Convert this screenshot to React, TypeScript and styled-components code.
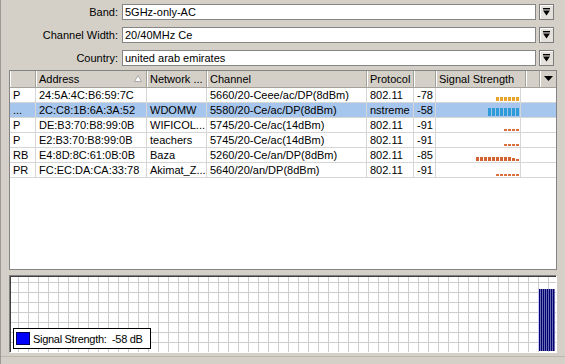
import styled, { createGlobalStyle } from "styled-components";

const GlobalStyle = createGlobalStyle`
  html, body {
    margin: 0;
    padding: 0;
    background: #d4d0c8;
  }
  body {
    font-family: "Liberation Sans", Arial, sans-serif;
    font-size: 11px;
    color: #000;
  }
`;

const Window = styled.div`
  box-sizing: border-box;
  width: 565px;
  height: 364px;
  border-left: 1px solid #9c9a94;
  display: flex;
  flex-direction: column;
  overflow: hidden;
`;

const Form = styled.div`
  display: flex;
  flex-direction: column;
  gap: 7px;
  padding: 4px 11px 0 0;
`;

const FieldRow = styled.div`
  display: flex;
  align-items: stretch;
  height: 16px;
`;

const Label = styled.div`
  width: 117px;
  margin-right: 4px;
  text-align: right;
  line-height: 16px;
`;

const Input = styled.div`
  flex: 1;
  box-sizing: border-box;
  background: #fff;
  border: 1px solid #858585;
  padding-left: 2px;
  line-height: 14px;
`;

const DropButton = styled.div`
  box-sizing: border-box;
  width: 15px;
  margin-left: 3px;
  border: 1px solid #7c7c7c;
  background: #e4e1dc;
  box-shadow: inset 1px 1px #fff;
  display: flex;
  align-items: center;
  justify-content: center;
`;

const Table = styled.div`
  box-sizing: border-box;
  margin: 4px 8px 0 8px;
  height: 200px;
  background: #fff;
  border: 1px solid #848484;
  display: flex;
  flex-direction: column;
`;

const headCols = "26px 111px 60px 160px 47px 22px 90px 14px 16px";
const rowCols = "26px 111px 60px 160px 47px 22px 85px 35px";

const HeaderRow = styled.div`
  display: grid;
  grid-template-columns: ${headCols};
  height: 16px;
  background: #d4d0c8;
  border-bottom: 1px solid #a3a19b;
`;

const HeadCell = styled.div<{ $center?: boolean }>`
  box-sizing: border-box;
  position: relative;
  padding-left: 3px;
  line-height: 16px;
  border-right: 1px solid #a3a19b;
  box-shadow: inset 1px 0 #fff;
  white-space: nowrap;
  overflow: hidden;
  display: flex;
  align-items: center;
  justify-content: ${(p) => (p.$center ? "center" : "flex-start")};
  &:last-child {
    border-right: none;
    padding-left: 0;
  }
`;

const SortMark = styled.span`
  position: absolute;
  right: 4px;
  top: 4px;
  display: flex;
`;

const Row = styled.div<{ $selected?: boolean }>`
  display: grid;
  grid-template-columns: ${rowCols};
  height: 14px;
  border-bottom: 1px solid #d6d6d6;
  background: ${(p) => (p.$selected ? "#a6c6ee" : "#fff")};
`;

const Cell = styled.div`
  box-sizing: border-box;
  padding-left: 3px;
  line-height: 14px;
  border-right: 1px solid #d6d6d6;
  white-space: nowrap;
  overflow: hidden;
  &:last-child {
    border-right: none;
  }
`;

const BarCell = styled.div`
  box-sizing: border-box;
  border-right: 1px solid #d6d6d6;
  display: flex;
  justify-content: flex-end;
  align-items: flex-end;
  gap: 1px;
  padding: 0 1px 1px 0;
`;

const Seg = styled.span<{ $color: string }>`
  display: block;
  width: 3px;
  background: ${(p) => p.$color};
`;

const Chart = styled.div`
  position: relative;
  box-sizing: border-box;
  margin: 5px 8px 0 8px;
  height: 78px;
  border: 1px solid;
  border-color: #808080 #fff #fff #808080;
  box-shadow: inset 1px 1px #404040;
  background-color: #fff;
  background-image: linear-gradient(to right, #cdcdcd 1px, transparent 1px),
    linear-gradient(to bottom, #cdcdcd 1px, transparent 1px);
  background-size: 10px 10px;
  background-position: 8px 6px;
  display: flex;
  justify-content: flex-end;
  align-items: flex-end;
  padding: 0 1px 1px 0;
`;

const SignalBar = styled.div`
  width: 16px;
  height: 62px;
  background: repeating-linear-gradient(
    to right,
    #00006e 0 1px,
    #6c6cb4 1px 2px
  );
  box-shadow: -1px 0 #c8c8ff;
`;

const Legend = styled.div`
  position: absolute;
  left: 3px;
  bottom: 3px;
  box-sizing: border-box;
  width: 138px;
  height: 21px;
  background: #fff;
  border: 1px solid #000;
  display: flex;
  align-items: center;
  gap: 3px;
  padding-left: 2px;
  white-space: pre;
  letter-spacing: -0.3px;
`;

const Swatch = styled.span`
  box-sizing: border-box;
  width: 14px;
  height: 13px;
  background: #0000ff;
  border: 1px solid #00005a;
`;

const StatusBar = styled.div`
  flex: 1;
  margin-top: 3px;
  border-top: 1px solid #bcb8b0;
`;

const DropIcon = () => (
  <svg width="7" height="8" viewBox="0 0 7 8">
    <rect x="0" y="0" width="7" height="1.4" fill="#000" />
    <polygon points="0,2.5 7,2.5 3.5,7.5" fill="#000" />
  </svg>
);

const fields = [
  { label: "Band:", value: "5GHz-only-AC" },
  { label: "Channel Width:", value: "20/40MHz Ce" },
  { label: "Country:", value: "united arab emirates" },
];

type SigRow = {
  flag: string;
  address: string;
  network: string;
  channel: string;
  protocol: string;
  signal: string;
  color: string;
  segs: number[];
  selected?: boolean;
};

const rows: SigRow[] = [
  { flag: "P", address: "24:5A:4C:B6:59:7C", network: "", channel: "5660/20-Ceee/ac/DP(8dBm)", protocol: "802.11", signal: "-78", color: "#e8a42c", segs: [4, 4, 4, 4, 4, 4] },
  { flag: "...", address: "2C:C8:1B:6A:3A:52", network: "WDOMW", channel: "5580/20-Ce/ac/DP(8dBm)", protocol: "nstreme", signal: "-58", color: "#2e9ad8", segs: [8, 8, 8, 8, 8, 8, 8, 8], selected: true },
  { flag: "P", address: "DE:B3:70:B8:99:0B", network: "WIFICOL...", channel: "5745/20-Ce/ac(14dBm)", protocol: "802.11", signal: "-91", color: "#d8703c", segs: [2, 2, 2, 2] },
  { flag: "P", address: "E2:B3:70:B8:99:0B", network: "teachers", channel: "5745/20-Ce/ac(14dBm)", protocol: "802.11", signal: "-91", color: "#d8703c", segs: [2, 2, 2, 2] },
  { flag: "RB", address: "E4:8D:8C:61:0B:0B", network: "Baza", channel: "5260/20-Ce/an/DP(8dBm)", protocol: "802.11", signal: "-85", color: "#d4612e", segs: [4, 4, 4, 4, 4, 4, 4, 4, 4, 3, 2] },
  { flag: "PR", address: "FC:EC:DA:CA:33:78", network: "Akimat_Z...", channel: "5640/20/an/DP(8dBm)", protocol: "802.11", signal: "-91", color: "#d8703c", segs: [2, 2, 2, 2, 2, 2] },
];

export default function App() {
  return (
    <>
      <GlobalStyle />
      <Window>
        <Form>
          {fields.map((f) => (
            <FieldRow key={f.label}>
              <Label>{f.label}</Label>
              <Input>{f.value}</Input>
              <DropButton>
                <DropIcon />
              </DropButton>
            </FieldRow>
          ))}
        </Form>

        <Table>
          <HeaderRow>
            <HeadCell />
            <HeadCell>
              Address
              <SortMark>
                <svg width="8" height="7" viewBox="0 0 8 7">
                  <polygon points="4,0.5 7.5,6.5 0.5,6.5" fill="#fff" stroke="#a8a8a8" strokeWidth="1" />
                </svg>
              </SortMark>
            </HeadCell>
            <HeadCell>Network ...</HeadCell>
            <HeadCell>Channel</HeadCell>
            <HeadCell>Protocol</HeadCell>
            <HeadCell />
            <HeadCell>Signal Strength</HeadCell>
            <HeadCell />
            <HeadCell $center>
              <svg width="9" height="6" viewBox="0 0 9 6">
                <polygon points="0,0 9,0 4.5,5" fill="#000" />
              </svg>
            </HeadCell>
          </HeaderRow>
          {rows.map((r) => (
            <Row key={r.address} $selected={r.selected}>
              <Cell>{r.flag}</Cell>
              <Cell>{r.address}</Cell>
              <Cell>{r.network}</Cell>
              <Cell>{r.channel}</Cell>
              <Cell>{r.protocol}</Cell>
              <Cell>{r.signal}</Cell>
              <BarCell>
                {r.segs.map((h, i) => (
                  <Seg key={i} $color={r.color} style={{ height: h }} />
                ))}
              </BarCell>
              <Cell />
            </Row>
          ))}
        </Table>

        <Chart>
          <SignalBar />
          <Legend>
            <Swatch />
            {"Signal Strength:  -58 dB"}
          </Legend>
        </Chart>

        <StatusBar />
      </Window>
    </>
  );
}
